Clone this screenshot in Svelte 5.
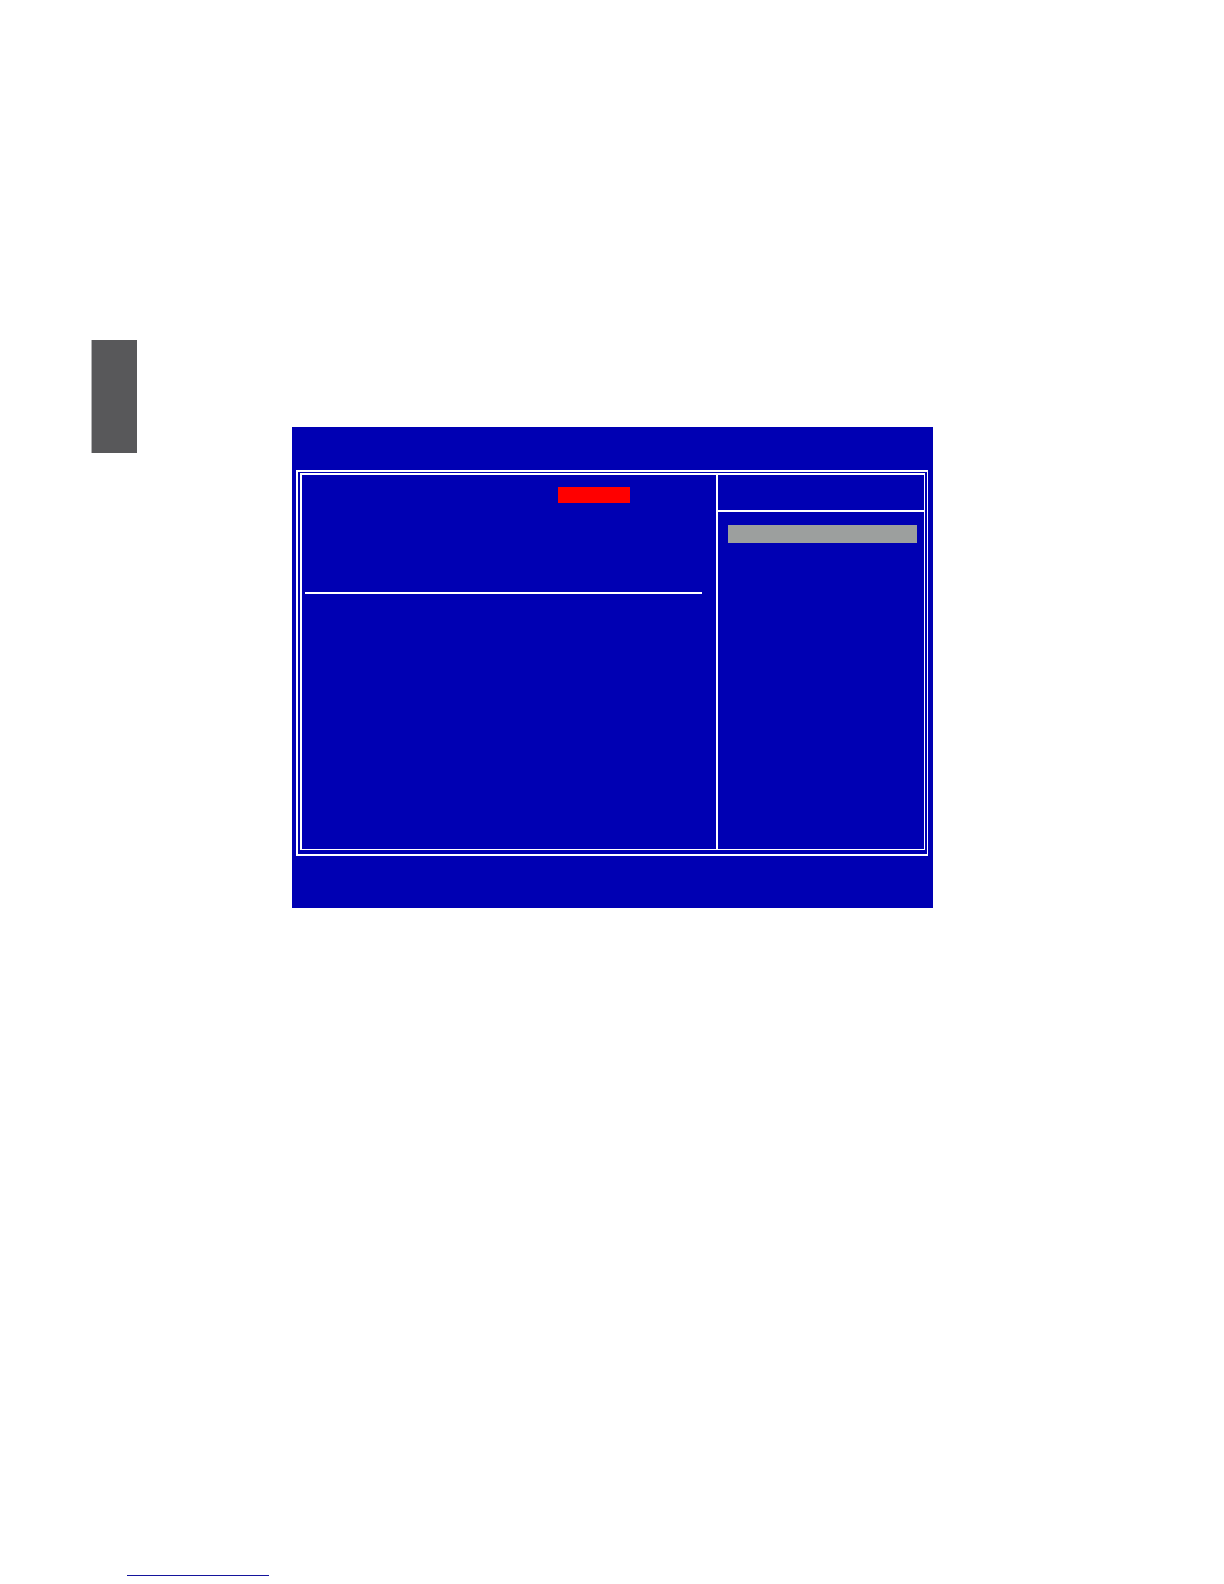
<script lang="ts">
	interface Props {
		class?: string;
	}

	let { class: className = '' }: Props = $props();
</script>

<div class="page {className}">
	<main class="content">
		<aside class="chapter-tab"></aside>
		<section class="bios">
			<div class="frame">
				<div class="panel">
					<div class="settings">
						<div class="options">
							<div class="option-label"></div>
							<div class="option-value"></div>
						</div>
						<hr class="rule" />
					</div>
					<div class="help">
						<div class="help-title"></div>
						<div class="help-level"></div>
					</div>
				</div>
			</div>
		</section>
	</main>
	<footer class="footer">
		<div class="footer-line"></div>
	</footer>
</div>

<style>
	:global(body) {
		margin: 0;
		background: #fff;
		font-family: 'Liberation Sans', Arial, sans-serif;
	}

	.page {
		box-sizing: border-box;
		display: flex;
		flex-direction: column;
		justify-content: space-between;
		min-height: 100vh;
		padding: 340px 291px 8px 91px;
	}

	.content {
		display: flex;
		align-items: flex-start;
		gap: 155px;
	}

	.chapter-tab {
		flex: 0 0 45px;
		height: 113px;
		border-left: 1px solid #b4b4b5;
		background: #58585a;
	}

	.bios {
		flex: 1;
		min-width: 0;
		margin-top: 87px;
		padding: 43px 5px 52px 4px;
		background: #0000b3;
	}

	/* double outline around both columns */
	.frame {
		padding: 1px 2px 4px 2px;
		border: solid #fff;
		border-width: 2px 1px 2px 2px;
	}

	.panel {
		display: grid;
		grid-template-columns: 1fr 208px;
		min-height: 374px;
		border: solid #fff;
		border-width: 2px 1px 1px 2px;
	}

	.settings {
		padding: 12px 14px 0 3px;
	}

	.options {
		display: grid;
		grid-template-columns: 253px 72px;
		min-height: 105px;
	}

	.option-value {
		height: 16px;
		background: #f00;
	}

	.rule {
		height: 2px;
		margin: 0;
		border: 0;
		background: #fff;
	}

	.help {
		border-left: 2px solid #fff;
	}

	.help-title {
		height: 35px;
		border-bottom: 2px solid #fff;
	}

	.help-level {
		height: 18px;
		margin: 13px 7px 0 10px;
		background: #9c9f9e;
	}

	.footer {
		padding-left: 36px;
	}

	.footer-line {
		width: 142px;
		height: 1px;
		background: #14149c;
	}
</style>
